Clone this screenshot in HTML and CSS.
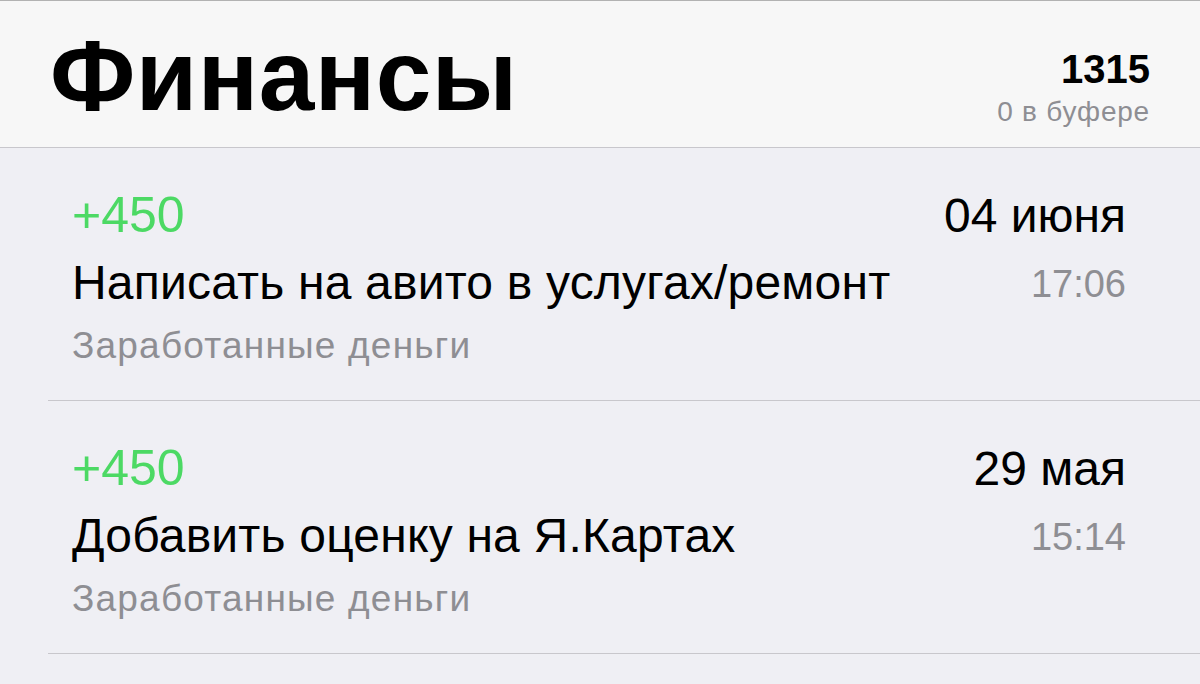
FILE: index.html
```html
<!DOCTYPE html>
<html lang="ru">

<head>
    <meta charset="UTF-8">
    <meta name="viewport" content="width=device-width, initial-scale=1.0">
    <title>Финансы</title>
    <link rel="stylesheet" href="styles.css">
</head>

<body>
    <header class="header">
        <h1 class="title">Финансы</h1>
        <div class="balance">
            <div class="balance-total">1315</div>
            <div class="balance-buffer">0 в буфере</div>
        </div>
    </header>

    <ul class="list">
        <li class="entry">
            <div class="entry-amount">+450</div>
            <div class="entry-date">04 июня</div>
            <div class="entry-name">Написать на авито в услугах/ремонт</div>
            <div class="entry-time">17:06</div>
            <div class="entry-category">Заработанные деньги</div>
        </li>
        <li class="entry">
            <div class="entry-amount">+450</div>
            <div class="entry-date">29 мая</div>
            <div class="entry-name">Добавить оценку на Я.Картах</div>
            <div class="entry-time">15:14</div>
            <div class="entry-category">Заработанные деньги</div>
        </li>
    </ul>
</body>

</html>
```

FILE: styles.css
```css
/* finance list, iOS style */

body {
    margin: 0;
    height: 684px;
    overflow: hidden;
    background: #efeff4;
    font-family: "Liberation Sans", Arial, sans-serif;
    color: #000;
}

/* header */

.header {
    display: flex;
    justify-content: space-between;
    align-items: flex-start;
    height: 146px;
    padding: 0 50px;
    background: #f7f7f7;
    border-top: 1px solid #b2b2b2;
    border-bottom: 1px solid #c8c7cc;
}

.title {
    margin: 0;
    padding-top: 24px;
    font-size: 100px;
    line-height: 100px;
    font-weight: bold;
    letter-spacing: 0.5px;
}

.balance {
    display: flex;
    flex-direction: column;
    align-items: flex-end;
    padding-top: 48px;
}

.balance-total {
    font-size: 40px;
    line-height: 40px;
    font-weight: bold;
}

.balance-buffer {
    font-size: 28px;
    line-height: 45px;
    letter-spacing: 0.8px;
    color: #8e8e93;
}

/* entries */

.list {
    list-style: none;
    margin: 0;
    padding: 0 0 0 48px;
}

.entry {
    display: grid;
    grid-template-columns: 1fr auto;
    grid-template-rows: 66px 70px 56px;
    align-items: baseline;
    padding: 34px 74px 26px 24px;
    border-bottom: 1px solid #c8c7cc;
}

.entry-amount {
    font-size: 50px;
    line-height: 66px;
    color: #4cd964;
}

.entry-date {
    font-size: 48px;
    line-height: 66px;
    text-align: right;
}

.entry-name {
    font-size: 48px;
    line-height: 70px;
    letter-spacing: 0.2px;
}

.entry-time {
    align-self: start;
    font-size: 38px;
    line-height: 72px;
    color: #8e8e93;
    text-align: right;
}

.entry-category {
    grid-column: 1 / 3;
    font-size: 37px;
    line-height: 56px;
    letter-spacing: 1.2px;
    color: #8e8e93;
}
```
